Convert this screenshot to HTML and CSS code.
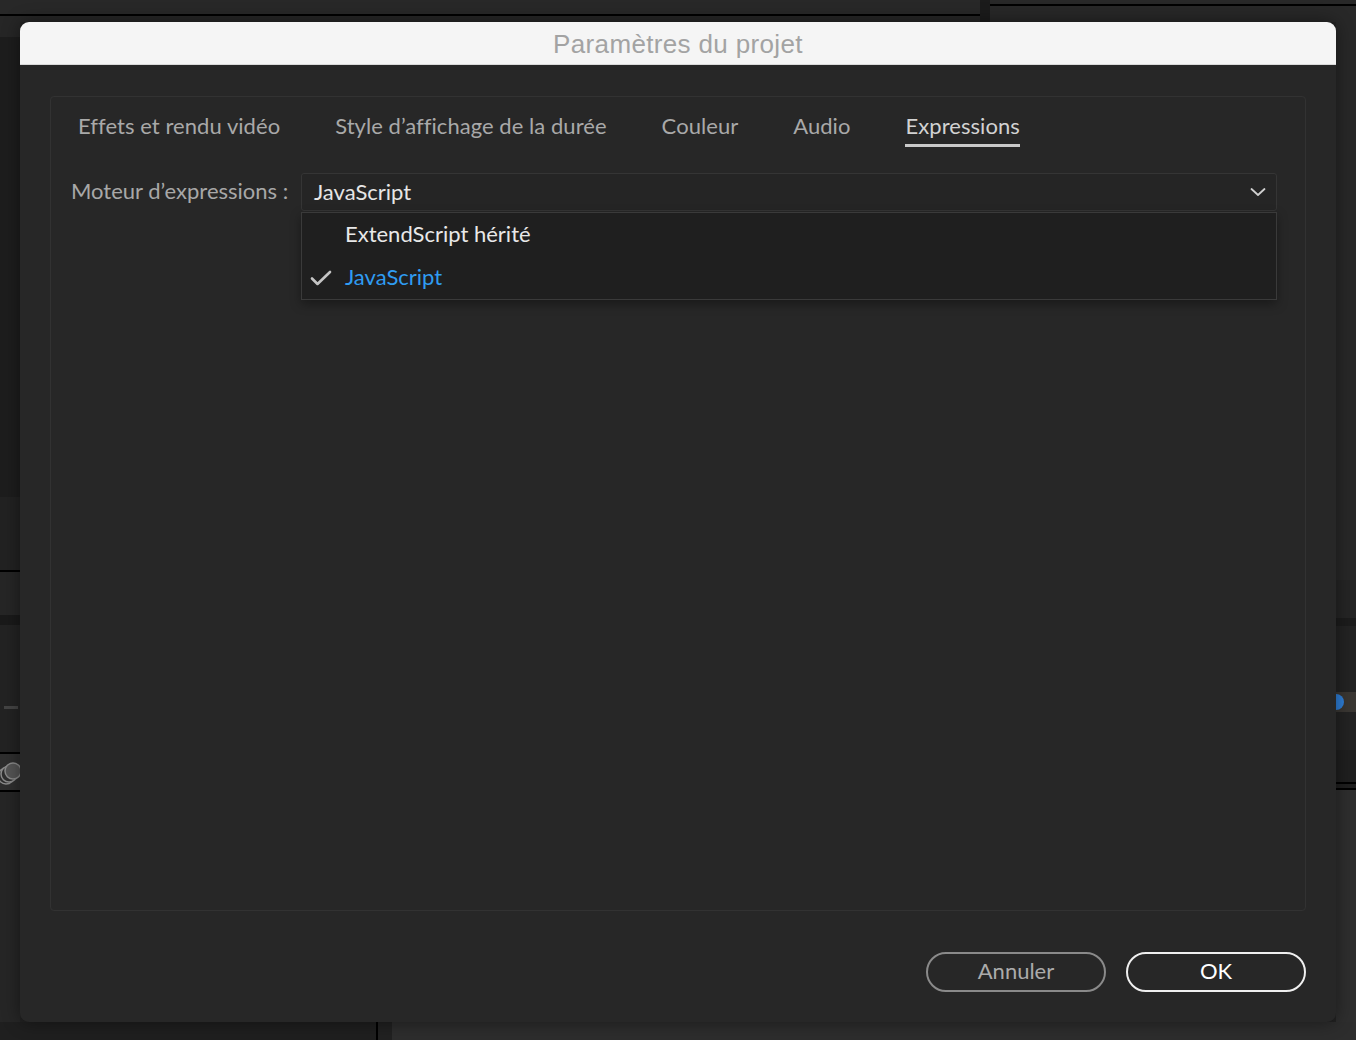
FILE: index.html
```html
<!DOCTYPE html>
<html lang="fr">
<head>
<meta charset="utf-8">
<title>Paramètres du projet</title>
<link rel="stylesheet" href="styles.css">
</head>
<body>
<div class="app">
  <div class="topbar">
    <div class="top-left"></div>
    <div class="top-divider"></div>
    <div class="top-right"></div>
  </div>
  <div class="middle">
    <div class="rail rail-left">
      <div class="blk l1"></div>
      <div class="blk l2"></div>
      <div class="blk l3"></div>
      <div class="blk line"></div>
      <div class="blk l4"></div>
      <div class="blk l5"></div>
      <div class="blk l6"><span class="tick"></span></div>
      <div class="blk line"></div>
      <div class="blk l7">
        <svg class="circles" width="20" height="36" viewBox="0 0 20 36">
          <circle cx="6" cy="22" r="8" fill="none" stroke="#8a8a8a" stroke-width="1.5"/>
          <circle cx="9" cy="20" r="8" fill="#2e2e2e" stroke="#8a8a8a" stroke-width="1.5"/>
          <circle cx="13" cy="17" r="8" fill="#555" stroke="#8a8a8a" stroke-width="1.5"/>
        </svg>
      </div>
      <div class="blk line"></div>
      <div class="blk l8"></div>
    </div>
    <div class="center"></div>
    <div class="rail rail-right">
      <div class="blk r1"></div>
      <div class="blk r2"></div>
      <div class="blk r3"></div>
      <div class="blk r4"></div>
      <div class="blk r5"><span class="knob"></span></div>
      <div class="blk r4b"></div>
      <div class="blk r6"></div>
      <div class="blk line"></div>
      <div class="blk r7"></div>
      <div class="blk line"></div>
      <div class="blk r8"></div>
    </div>
  </div>
  <div class="bottombar">
    <div class="bot-a"></div>
    <div class="bot-line"></div>
    <div class="bot-b"></div>
    <div class="bot-c"></div>
  </div>
</div>

<div class="dialog">
  <div class="titlebar">Paramètres du projet</div>
  <div class="dialog-body">
    <div class="panel">
      <div class="tabs">
        <div class="tab">Effets et rendu vidéo</div>
        <div class="tab">Style d’affichage de la durée</div>
        <div class="tab">Couleur</div>
        <div class="tab">Audio</div>
        <div class="tab active">Expressions</div>
      </div>
      <div class="field">
        <div class="label">Moteur d’expressions :</div>
        <div class="select">
          <span class="select-value">JavaScript</span>
          <svg class="chevron" width="16" height="10" viewBox="0 0 16 10">
            <path d="M1.5 2 L8 8 L14.5 2" fill="none" stroke="#cfcfcf" stroke-width="1.8" stroke-linecap="round" stroke-linejoin="round"/>
          </svg>
          <div class="menu">
            <div class="item">ExtendScript hérité</div>
            <div class="item selected">
              <svg class="check" width="22" height="16" viewBox="0 0 22 16">
                <path d="M2 8.5 L7.5 14 L20 2" fill="none" stroke="#c4c4c4" stroke-width="2.6" stroke-linecap="round" stroke-linejoin="round"/>
              </svg>
              JavaScript
            </div>
          </div>
        </div>
      </div>
    </div>
    <div class="buttons">
      <button class="btn cancel">Annuler</button>
      <button class="btn ok">OK</button>
    </div>
  </div>
</div>
</body>
</html>
```

FILE: styles.css
```css
* { box-sizing: border-box; }

html, body {
  margin: 0;
  padding: 0;
  width: 1356px;
  height: 1040px;
  overflow: hidden;
  background: #1e1e1e;
  font-family: "Lato", "Noto Sans", sans-serif;
}

/* ---------- background application ---------- */
.app {
  display: flex;
  flex-direction: column;
  height: 1040px;
}

.topbar {
  display: flex;
  height: 22px;
}
.top-left {
  width: 980px;
  background: linear-gradient(#282828 0 14px, #000 14px 16px, #262626 16px);
}
.top-divider {
  width: 10px;
  background: #1b1b1b;
}
.top-right {
  flex: 1;
  background: linear-gradient(#282828 0 4px, #000 4px 6px, #282828 6px);
}

.middle {
  display: flex;
  height: 1000px;
}
.rail {
  width: 20px;
  display: flex;
  flex-direction: column;
}
.center {
  flex: 1;
  background: #222;
}
.blk { width: 100%; position: relative; }
.blk.line { height: 2px; background: #000; }

.l1 { height: 15px; background: #262626; }
.l2 { height: 460px; background: #1d1d1d; }
.l3 { height: 73px; background: #222; }
.l4 { height: 43px; background: #262626; }
.l5 { height: 10px; background: #1a1a1a; }
.l6 { height: 127px; background: #232323; display: flex; align-items: flex-end; }
.l6 .tick {
  display: block;
  width: 14px;
  height: 3px;
  margin: 0 0 43px 4px;
  background: #444;
}
.l7 { height: 36px; background: #2e2e2e; overflow: hidden; }
.circles { display: block; }
.l8 { height: 230px; background: #262626; }

.r1 { height: 558px; background: #282828; }
.r2 { height: 38px; background: #252525; }
.r3 { height: 8px; background: #1c1c1c; }
.r4 { height: 66px; background: #232323; }
.r5 { height: 20px; background: #3a3733; display: flex; align-items: center; }
.knob {
  display: block;
  width: 8px;
  height: 16px;
  background: #2f7fd8;
  border-radius: 0 9px 9px 0;
}
.r4b { height: 38px; background: #232323; }
.r6 { height: 32px; background: #1f1f1f; }
.r7 { height: 4px; background: #1f1f1f; }
.r8 { height: 232px; background: #2e2e2e; }

.bottombar {
  display: flex;
  height: 18px;
}
.bot-a { width: 376px; background: #1f1f1f; }
.bot-line { width: 2px; background: #000; }
.bot-b { width: 14px; background: #212121; }
.bot-c { flex: 1; background: #2d2d2d; }

/* ---------- dialog ---------- */
.dialog {
  position: absolute;
  left: 20px;
  top: 22px;
  width: 1316px;
  height: 1000px;
  background: #272727;
  border-radius: 9px;
  box-shadow: 0 0 18px rgba(0, 0, 0, 0.45);
  display: flex;
  flex-direction: column;
  overflow: hidden;
}

.titlebar {
  height: 43px;
  flex: none;
  background: #f5f5f5;
  border-bottom: 1px solid #d9d9d9;
  color: #a3a3a3;
  font-family: "Liberation Sans", Arial, sans-serif;
  font-size: 26px;
  letter-spacing: 0.35px;
  line-height: 44px;
  text-align: center;
}

.dialog-body {
  flex: 1;
  display: flex;
  flex-direction: column;
  padding: 31px 30px 30px;
}

.panel {
  flex: 1;
  border: 1px solid #323232;
  border-radius: 4px;
  background: #272727;
  padding: 15px 28px 0 20px;
}

.tabs {
  display: flex;
  gap: 55px;
  padding-left: 7px;
}
.tab {
  font-size: 22px;
  letter-spacing: 0.05px;
  line-height: 28px;
  padding-bottom: 4px;
  border-bottom: 3px solid transparent;
  color: #a9a9a9;
  white-space: nowrap;
}
.tab.active {
  color: #d2d2d2;
  border-bottom-color: #c9c9c9;
}

.field {
  display: flex;
  align-items: center;
  margin-top: 26px;
}
.label {
  width: 230px;
  flex: none;
  font-size: 22px;
  line-height: 26px;
  padding-bottom: 2px;
  color: #a8a8a8;
  white-space: nowrap;
}
.select {
  position: relative;
  flex: 1;
  height: 38px;
  border: 1px solid #353535;
  border-radius: 3px;
  background: #252525;
  display: flex;
  align-items: center;
  justify-content: space-between;
  padding: 0 10px 2px 12px;
}
.select-value {
  font-size: 22px;
  color: #e6e6e6;
}
.chevron { display: block; margin-top: 2px; }

.menu {
  position: absolute;
  left: -1px;
  right: -1px;
  top: 38px;
  background: #1f1f1f;
  border: 1px solid #3a3a3a;
  box-shadow: 0 4px 10px rgba(0, 0, 0, 0.35);
}
.item {
  position: relative;
  height: 43px;
  line-height: 42px;
  padding-left: 43px;
  font-size: 22px;
  color: #e8e8e8;
}
.item.selected { color: #2f9cf2; }
.check {
  position: absolute;
  left: 8px;
  top: 14px;
}

.buttons {
  display: flex;
  justify-content: flex-end;
  gap: 20px;
  margin-top: 41px;
}
.btn {
  width: 180px;
  height: 40px;
  border-radius: 20px;
  background: transparent;
  font-family: "Lato", "Noto Sans", sans-serif;
  font-size: 22px;
  line-height: 34px;
  padding: 0 0 2px;
  cursor: pointer;
}
.btn.cancel {
  border: 2px solid #8a8a8a;
  color: #ababab;
}
.btn.ok {
  border: 2px solid #efefef;
  color: #ffffff;
}
```
